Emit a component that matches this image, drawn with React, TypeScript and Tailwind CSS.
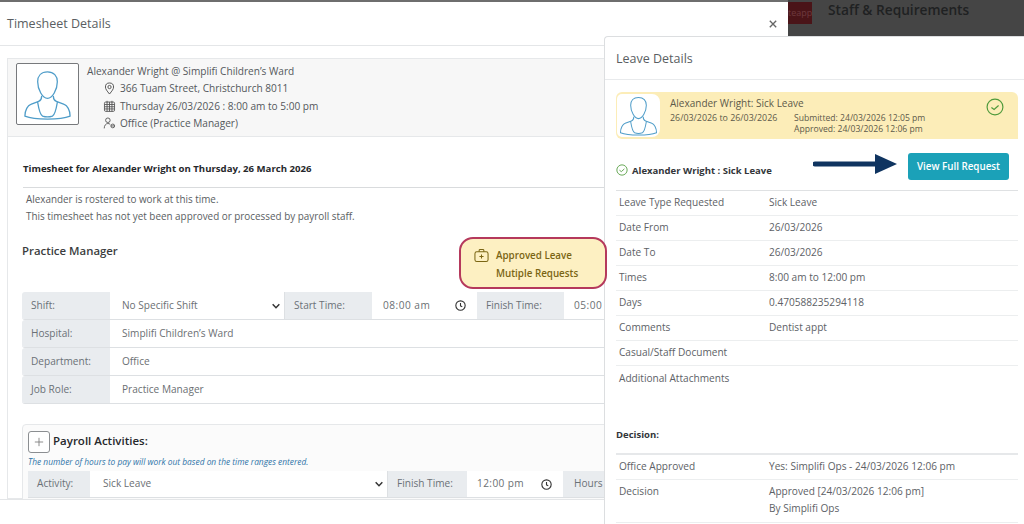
import React from "react";

const font = { fontFamily: '"Open Sans", "Noto Sans", sans-serif' };

function Avatar({ className }: { className: string }) {
  return (
    <svg viewBox="0 0 60 60" className={`${className} shrink-0`} fill="none" stroke="#4f9dc9" strokeWidth="1.300" strokeLinejoin="round" strokeLinecap="round">
      <path d="M30 7c-6.500 0-10 4-10 10 0 8 5 17 10 17s10-9 10-17c0-6-3.500-10-10-10z" />
      <path d="M24 32c0 3-.5 4-3 5l-8 3c-3 1-6 6-6 12 5 2 14 3 23 3s18-1 23-3c0-6-3-11-6-12l-8-3c-2.500-1-3-2-3-5" />
      <path d="M20 38c1 6 3 13 5 14 3 1 7 1 10 0 2-1 4-8 5-14" />
    </svg>
  );
}

function Clock() {
  return (
    <svg viewBox="0 0 16 16" className="w-[11px] h-[11px]" fill="none" stroke="#333" strokeWidth="1.600">
      <circle cx="8" cy="8" r="6.800" />
      <path d="M8 4.200V8.500l2.600 1.500" />
    </svg>
  );
}

function Chevron() {
  return (
    <svg viewBox="0 0 12 12" className="w-[10px] h-[10px]" fill="none" stroke="#333" strokeWidth="1.800">
      <path d="M2 4l4 4 4-4" />
    </svg>
  );
}

function Lbl({ w, children }: { w: string; children: React.ReactNode }) {
  return (
    <div className={`${w} shrink-0 bg-[#e9ecef] flex items-center pl-[9px] text-[#6b7177]`}>{children}</div>
  );
}

function Row({ children }: { children: React.ReactNode }) {
  return (
    <div className="h-[27px] flex text-[10.100px] border-b border-[#dde0e3] bg-white overflow-hidden rounded-l-[3px] box-content">
      {children}
    </div>
  );
}

function Val({ children }: { children: React.ReactNode }) {
  return <div className="flex-1 flex items-center pl-[12px] text-[#6b6f73]">{children}</div>;
}

function Info({ k, v, last }: { k: string; v?: string; last?: boolean }) {
  return (
    <div className={`h-[25px] flex items-center pl-[3px] text-[10.100px] text-[#5d6166] ${last ? "" : "border-b border-[#eceeef]"}`}>
      <div className="w-[150px] shrink-0">{k}</div>
      <div>{v}</div>
    </div>
  );
}

export default function App() {
  return (
    <div style={font} className="relative w-[1024px] h-[524px] overflow-hidden bg-[#454545] flex">
      {/* Timesheet modal */}
      <div className="w-[788px] h-full shrink-0 bg-white border-t-2 border-[#6e6e6e] flex flex-col">
        <div className="h-[44px] shrink-0 border-b border-[#e4e6e8] flex items-center justify-between pl-[7px] pr-[11px] pt-[1px]">
          <span className="text-[12.500px] text-[#5a5e62]">Timesheet Details</span>
          <svg viewBox="0 0 10 10" className="w-[8px] h-[8px]" stroke="#666" strokeWidth="1.700">
            <path d="M1 1l8 8M9 1l-8 8" />
          </svg>
        </div>

        <div className="flex-1 min-h-0 overflow-hidden pl-[7px] pr-[8px] pt-[12px]">
          <div className="border border-[#e6e8ea] h-full">
            <div className="h-[78px] bg-[#f7f7f7] border-b border-[#e6e8ea] flex pl-[8px] pt-[4px]">
              <div className="w-[63px] h-[62px] bg-white border border-[#77797c] rounded-[2px] flex items-center justify-center shrink-0">
                <Avatar className="w-[59px] h-[59px]" />
              </div>
              <div className="ml-[8px] text-[10.100px] leading-[17.300px] text-[#54585c]">
                <div>Alexander Wright @ Simplifi Children’s Ward</div>
                <div className="flex items-center pl-[16px] gap-[4px]">
                  <svg viewBox="0 0 16 16" className="w-[13px] h-[13px]" fill="none" stroke="#555" strokeWidth="1.200">
                    <path d="M8 14.800C5 11 3 8.800 3 6.200a5 5 0 0110 0c0 2.600-2 4.800-5 8.600z" />
                    <circle cx="8" cy="6.200" r="2" />
                  </svg>
                  366 Tuam Street, Christchurch 8011
                </div>
                <div className="flex items-center pl-[16px] gap-[4px]">
                  <svg viewBox="0 0 16 16" className="w-[13px] h-[13px]" fill="none" stroke="#555" strokeWidth="1.100">
                    <rect x="1.800" y="2.500" width="12.400" height="11.500" rx="1.500" />
                    <path d="M2 5.500h12M2 8.300h12M2 11h12M5 2.500V14M8 2.500V14M11 2.500V14M5 1v2M11 1v2" />
                  </svg>
                  Thursday 26/03/2026 : 8:00 am to 5:00 pm
                </div>
                <div className="flex items-center pl-[16px] gap-[4px]">
                  <svg viewBox="0 0 16 16" className="w-[13px] h-[13px]" fill="none" stroke="#555" strokeWidth="1.100">
                    <circle cx="6" cy="4" r="2.800" />
                    <path d="M1.500 14c0-3.500 2-6 4.500-6 1 0 2 .3 2.800 1" />
                    <circle cx="12" cy="11" r="2.300" />
                    <path d="M9.800 11h4.400" />
                  </svg>
                  Office (Practice Manager)
                </div>
              </div>
            </div>

            <div className="pl-[14px] pt-[24px]">
              <div className="ml-px text-[9.600px] leading-[16px] font-bold text-[#26282b]">Timesheet for Alexander Wright on Thursday, 26 March 2026</div>
              <div className="ml-px mt-[10px] border-t border-[#d9dbdd]" />
              <div className="pl-[4px] pt-[3px] text-[9.900px] leading-[17px] text-[#5a5e62]">
                <div>Alexander is rostered to work at this time.</div>
                <div>This timesheet has not yet been approved or processed by payroll staff.</div>
              </div>

              <div className="mt-[12px] h-[52px] flex items-start justify-between">
                <div className="pt-[6px] text-[11.400px] leading-[16px] font-semibold text-[#3b3d40]">Practice Manager</div>
                <div className="relative z-10 w-[148px] h-[52px] mr-[172px] rounded-[14px] border-2 border-[#b5395c] bg-[#fdf0c2] flex pl-[13px] pt-[8px] gap-[7px] text-[9.800px] leading-[17.500px] font-semibold text-[#7a6513]">
                  <svg viewBox="0 0 16 16" className="w-[15px] h-[15px] shrink-0 mt-[1px]" fill="none" stroke="#7a6513" strokeWidth="1.100">
                    <rect x="1" y="4" width="14" height="10.500" rx="2" />
                    <path d="M5.500 4V2.500a1 1 0 011-1h3a1 1 0 011 1V4M8 6.800v4.400M5.800 9h4.400" />
                  </svg>
                  <div>
                    <div>Approved Leave</div>
                    <div>Mutiple Requests</div>
                  </div>
                </div>
              </div>

              <div className="mt-[3px]">
                <Row>
                  <Lbl w="w-[88px]">Shift:</Lbl>
                  <div className="w-[175px] shrink-0 flex items-center justify-between pl-[12px] pr-[3px] text-[#6b6f73] border-r border-[#dde0e3]">
                    No Specific Shift <Chevron />
                  </div>
                  <Lbl w="w-[87px]">Start Time:</Lbl>
                  <div className="w-[105px] shrink-0 flex items-center justify-between pl-[11px] pr-[11px] text-[#6b6f73]">
                    <span className="tracking-[0.5px]">08:00 am</span> <Clock />
                  </div>
                  <Lbl w="w-[87px]">Finish Time:</Lbl>
                  <Val><span className="-ml-[2px] tracking-[0.5px]">05:00</span></Val>
                </Row>
                <Row><Lbl w="w-[88px]">Hospital:</Lbl><Val>Simplifi Children’s Ward</Val></Row>
                <Row><Lbl w="w-[88px]">Department:</Lbl><Val>Office</Val></Row>
                <Row><Lbl w="w-[88px]">Job Role:</Lbl><Val>Practice Manager</Val></Row>
              </div>

              <div className="mt-[20px] border border-[#e6e8ea] rounded-[4px] bg-[#fbfbfb] pl-[5px] pt-[6px] h-[90px]">
                <div className="flex items-center gap-[3px]">
                  <div className="w-[22px] h-[22px] border border-[#8b8e91] rounded-[3px] bg-white flex items-center justify-center">
                    <svg viewBox="0 0 12 12" className="w-[10px] h-[10px]" stroke="#777" strokeWidth="1"><path d="M6 1v10M1 6h10" /></svg>
                  </div>
                  <span className="-mt-[2px] text-[11.500px] font-semibold text-[#26282b]">Payroll Activities:</span>
                </div>
                <div className="mt-[3px] text-[8.400px] leading-[12px] italic text-[#2f74a8]">The number of hours to pay will work out based on the time ranges entered.</div>
                <div className="mt-[3px] h-[27px] flex text-[10.100px] border-b border-[#dde0e3] bg-white">
                  <Lbl w="w-[62px]">Activity:</Lbl>
                  <div className="w-[298px] shrink-0 flex items-center justify-between pl-[13px] pr-[3px] text-[#6b6f73] border-r border-[#dde0e3]">
                    Sick Leave <Chevron />
                  </div>
                  <Lbl w="w-[79px]">Finish Time:</Lbl>
                  <div className="w-[96px] shrink-0 flex items-center justify-between pl-[10px] pr-[11px] text-[#6b6f73]">
                    <span className="tracking-[0.4px]">12:00 pm</span> <Clock />
                  </div>
                  <div className="w-[60px] shrink-0 bg-[#e9ecef] flex items-center pl-[11px] text-[#6b7177]">Hours</div>
                </div>
              </div>
            </div>
          </div>
        </div>

        <div className="h-[25px] shrink-0 bg-white border-t border-[#e4e6e8]" />
      </div>

      {/* Page behind the modal */}
      <div className="flex-1 flex items-start">
        <div className="mt-[2px] w-[24px] h-[22px] bg-[#4a1418] text-[9px] leading-[22px] text-[#6e3a3e] overflow-hidden whitespace-nowrap">teapp</div>
        <div className="ml-[16px] text-[13.700px] font-semibold text-[#1f2122]">Staff &amp; Requirements</div>
      </div>

      {/* Leave panel overlay */}
      <div className="absolute left-[604px] top-[36px] right-0 bottom-0 bg-white border-l border-t border-[#dcdee0] rounded-tl-[4px]">
        <div className="h-[43px] border-b border-[#e8eaec] flex items-center pl-[11px] pt-[2px] text-[12.500px] text-[#5a5e62]">Leave Details</div>
        <div className="pl-[11px] pr-[6px]">
          <div className="mt-[12px] h-[47px] bg-[#fcedb8] rounded-l-[6px] rounded-tr-[6px] flex pl-[1px] py-[2px] relative">
            <div className="w-[43px] bg-white rounded-l-[5px] rounded-r-[8px] flex items-center justify-center">
              <Avatar className="w-[47px] h-[47px]" />
            </div>
            <div className="ml-[10px] text-[#5d5a4a]">
              <div className="text-[10px] leading-[14px] mt-[2px]">Alexander Wright: Sick Leave</div>
              <div className="flex mt-[1px]">
                <div className="w-[124px] leading-[14px] text-[8.900px]">26/03/2026 to 26/03/2026</div>
                <div className="text-[8.600px] leading-[11px] mt-[2px]">
                  <div>Submitted: 24/03/2026 12:05 pm</div>
                  <div>Approved: 24/03/2026 12:06 pm</div>
                </div>
              </div>
            </div>
            <svg viewBox="0 0 20 20" className="absolute right-[14px] top-[6px] w-[18px] h-[18px]" fill="none" stroke="#4f9a3c" strokeWidth="1.300">
              <circle cx="10" cy="10" r="8.800" />
              <path d="M6 10.500l3 2.300 5-4.500" />
            </svg>
          </div>

          <div className="mt-[14px] h-[27px] flex items-center pr-[9px] relative">
            <svg viewBox="0 0 14 14" className="w-[12px] h-[12px] mt-[7px]" fill="none" stroke="#4f9a3c" strokeWidth="1">
              <circle cx="7" cy="7" r="6" />
              <path d="M4 7.200l2.200 1.700 3.600-3.200" />
            </svg>
            <span className="ml-[4px] mt-[9px] text-[9.500px] font-bold text-[#33363a]">Alexander Wright : Sick Leave</span>
            <svg viewBox="0 0 84 20" className="absolute left-[197px] top-[1px] w-[84px] h-[20px]">
              <path d="M2 10h62" stroke="#0f3460" strokeWidth="5" strokeLinecap="round" />
              <path d="M62 0l22 10-22 10z" fill="#0f3460" />
            </svg>
            <div className="ml-auto w-[101px] h-[27px] pt-[1px] rounded-[3px] bg-[#1ba1b8] text-white text-[9.800px] font-semibold flex items-center justify-center">View Full Request</div>
          </div>

          <div className="mt-[10px] border-t border-[#dfe1e3]" />
          <Info k="Leave Type Requested" v="Sick Leave" />
          <Info k="Date From" v="26/03/2026" />
          <Info k="Date To" v="26/03/2026" />
          <Info k="Times" v="8:00 am to 12:00 pm" />
          <Info k="Days" v="0.470588235294118" />
          <Info k="Comments" v="Dentist appt" />
          <Info k="Casual/Staff Document" />
          <Info k="Additional Attachments" last />

          <div className="mt-[36px] text-[9.500px] leading-[16px] font-bold text-[#33363a]">Decision:</div>
          <div className="mt-[10px] border-t-2 border-[#e6e8ea]" />
          <Info k="Office Approved" v="Yes: Simplifi Ops - 24/03/2026 12:06 pm" />
          <div className="h-[43px] flex pl-[3px] pt-[3px] text-[10.100px] leading-[17px] text-[#5d6166] border-b border-[#eceeef]">
            <div className="w-[150px] shrink-0">Decision</div>
            <div>
              <div>Approved [24/03/2026 12:06 pm]</div>
              <div>By Simplifi Ops</div>
            </div>
          </div>
        </div>
      </div>
    </div>
  );
}
